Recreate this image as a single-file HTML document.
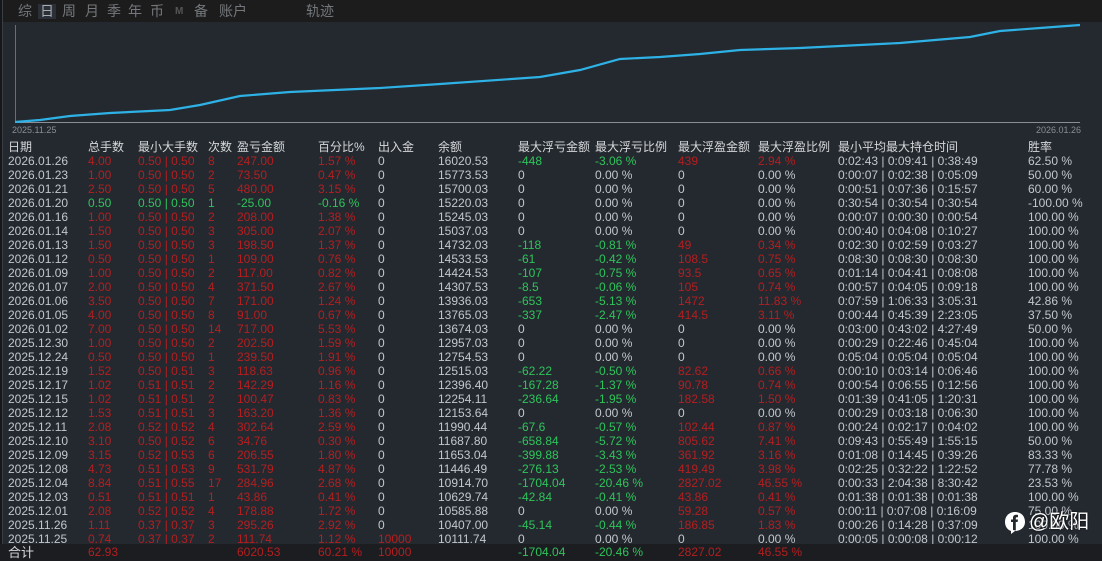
<!DOCTYPE html>
<html><head><meta charset="utf-8"><style>
*{margin:0;padding:0;box-sizing:border-box}
body{width:1102px;height:561px;overflow:hidden;background:#242930;font-family:"Liberation Sans","Noto Sans CJK SC",sans-serif;position:relative;color:#c3c7cc}
.top{position:absolute;left:0;top:0;width:1102px;height:22px;background:#1c1c1c}
.tab{position:absolute;top:4px;font-size:14px;color:#74787c;line-height:15px}
.sel{background:#2b3038;color:#a8acb0;padding:0 2px;margin-left:-2px}
.strip{position:absolute;left:0;top:0;width:3px;height:561px;background:#15171a;border-right:1px solid #3a3f46}
.r{position:absolute;left:0;width:1102px;height:14px;font-size:12px;line-height:14px}
.r i{font-style:normal;position:absolute;top:0;white-space:nowrap}
.r i:nth-child(1){left:8px}.r i:nth-child(2){left:88px}.r i:nth-child(3){left:138px}.r i:nth-child(4){left:208px}
.r i:nth-child(5){left:237px}.r i:nth-child(6){left:318px}.r i:nth-child(7){left:378px}.r i:nth-child(8){left:438px}
.r i:nth-child(9){left:518px}.r i:nth-child(10){left:595px}.r i:nth-child(11){left:678px}.r i:nth-child(12){left:758px}
.r i:nth-child(13){left:838px}.r i:nth-child(14){left:1028px}
.h{color:#d6d8da;font-size:12px}
.R{color:#b51e1f}.G{color:#2ec45a}
.rr i:nth-child(n+2):nth-child(-n+6){color:#b51e1f}
.gg i:nth-child(n+2):nth-child(-n+6){color:#2ec45a}
.tot{background:#1b1d21;height:17px;top:544px!important;line-height:17px}
</style></head><body>
<div class="top"></div>
<div class="strip"></div>
<span class="tab" style="left:18px">综</span>
<span class="tab sel" style="left:40px">日</span>
<span class="tab" style="left:62px">周</span>
<span class="tab" style="left:85px">月</span>
<span class="tab" style="left:107px">季</span>
<span class="tab" style="left:128px">年</span>
<span class="tab" style="left:150px">币</span>
<span class="tab" style="left:175px;font-size:10px;font-weight:bold;color:#555">M</span>
<span class="tab" style="left:194px">备</span>
<span class="tab" style="left:219px">账户</span>
<span class="tab" style="left:306px">轨迹</span>
<svg style="position:absolute;left:0;top:0" width="1102" height="140">
<line x1="15.5" y1="25" x2="15.5" y2="122" stroke="#6a6e74" stroke-width="1"/>
<line x1="15" y1="122.5" x2="1080" y2="122.5" stroke="#8a8e94" stroke-width="1"/>
<polyline fill="none" stroke="#2eb2e6" stroke-width="2.2" points="15,122 40,120 70,116 110,113 170,110 200,105 240,96 290,92 380,88 440,84 540,77 580,70 620,59 660,57 700,54 740,50 800,48 900,43 970,37 1000,31 1040,28 1080,25"/>
<text x="12" y="133" font-size="9" fill="#8a8e94" font-family="Liberation Sans">2025.11.25</text>
<text x="1036" y="133" font-size="9" fill="#8a8e94" font-family="Liberation Sans">2026.01.26</text>
</svg>
<div class="r h" style="top:140px"><i>日期</i><i>总手数</i><i>最小大手数</i><i>次数</i><i>盈亏金额</i><i>百分比%</i><i>出入金</i><i>余额</i><i>最大浮亏金额</i><i>最大浮亏比例</i><i>最大浮盈金额</i><i>最大浮盈比例</i><i>最小平均最大持仓时间</i><i>胜率</i></div>
<div class="r rr" style="top:154px"><i>2026.01.26</i><i>4.00</i><i>0.50 | 0.50</i><i>8</i><i>247.00</i><i>1.57 %</i><i>0</i><i>16020.53</i><i class="G">-448</i><i class="G">-3.06 %</i><i class="R">439</i><i class="R">2.94 %</i><i>0:02:43 | 0:09:41 | 0:38:49</i><i>62.50 %</i></div>
<div class="r rr" style="top:168px"><i>2026.01.23</i><i>1.00</i><i>0.50 | 0.50</i><i>2</i><i>73.50</i><i>0.47 %</i><i>0</i><i>15773.53</i><i>0</i><i>0.00 %</i><i>0</i><i>0.00 %</i><i>0:00:07 | 0:02:38 | 0:05:09</i><i>50.00 %</i></div>
<div class="r rr" style="top:182px"><i>2026.01.21</i><i>2.50</i><i>0.50 | 0.50</i><i>5</i><i>480.00</i><i>3.15 %</i><i>0</i><i>15700.03</i><i>0</i><i>0.00 %</i><i>0</i><i>0.00 %</i><i>0:00:51 | 0:07:36 | 0:15:57</i><i>60.00 %</i></div>
<div class="r gg" style="top:196px"><i>2026.01.20</i><i>0.50</i><i>0.50 | 0.50</i><i>1</i><i>-25.00</i><i>-0.16 %</i><i>0</i><i>15220.03</i><i>0</i><i>0.00 %</i><i>0</i><i>0.00 %</i><i>0:30:54 | 0:30:54 | 0:30:54</i><i>-100.00 %</i></div>
<div class="r rr" style="top:210px"><i>2026.01.16</i><i>1.00</i><i>0.50 | 0.50</i><i>2</i><i>208.00</i><i>1.38 %</i><i>0</i><i>15245.03</i><i>0</i><i>0.00 %</i><i>0</i><i>0.00 %</i><i>0:00:07 | 0:00:30 | 0:00:54</i><i>100.00 %</i></div>
<div class="r rr" style="top:224px"><i>2026.01.14</i><i>1.50</i><i>0.50 | 0.50</i><i>3</i><i>305.00</i><i>2.07 %</i><i>0</i><i>15037.03</i><i>0</i><i>0.00 %</i><i>0</i><i>0.00 %</i><i>0:00:40 | 0:04:08 | 0:10:27</i><i>100.00 %</i></div>
<div class="r rr" style="top:238px"><i>2026.01.13</i><i>1.50</i><i>0.50 | 0.50</i><i>3</i><i>198.50</i><i>1.37 %</i><i>0</i><i>14732.03</i><i class="G">-118</i><i class="G">-0.81 %</i><i class="R">49</i><i class="R">0.34 %</i><i>0:02:30 | 0:02:59 | 0:03:27</i><i>100.00 %</i></div>
<div class="r rr" style="top:252px"><i>2026.01.12</i><i>0.50</i><i>0.50 | 0.50</i><i>1</i><i>109.00</i><i>0.76 %</i><i>0</i><i>14533.53</i><i class="G">-61</i><i class="G">-0.42 %</i><i class="R">108.5</i><i class="R">0.75 %</i><i>0:08:30 | 0:08:30 | 0:08:30</i><i>100.00 %</i></div>
<div class="r rr" style="top:266px"><i>2026.01.09</i><i>1.00</i><i>0.50 | 0.50</i><i>2</i><i>117.00</i><i>0.82 %</i><i>0</i><i>14424.53</i><i class="G">-107</i><i class="G">-0.75 %</i><i class="R">93.5</i><i class="R">0.65 %</i><i>0:01:14 | 0:04:41 | 0:08:08</i><i>100.00 %</i></div>
<div class="r rr" style="top:280px"><i>2026.01.07</i><i>2.00</i><i>0.50 | 0.50</i><i>4</i><i>371.50</i><i>2.67 %</i><i>0</i><i>14307.53</i><i class="G">-8.5</i><i class="G">-0.06 %</i><i class="R">105</i><i class="R">0.74 %</i><i>0:00:57 | 0:04:05 | 0:09:18</i><i>100.00 %</i></div>
<div class="r rr" style="top:294px"><i>2026.01.06</i><i>3.50</i><i>0.50 | 0.50</i><i>7</i><i>171.00</i><i>1.24 %</i><i>0</i><i>13936.03</i><i class="G">-653</i><i class="G">-5.13 %</i><i class="R">1472</i><i class="R">11.83 %</i><i>0:07:59 | 1:06:33 | 3:05:31</i><i>42.86 %</i></div>
<div class="r rr" style="top:308px"><i>2026.01.05</i><i>4.00</i><i>0.50 | 0.50</i><i>8</i><i>91.00</i><i>0.67 %</i><i>0</i><i>13765.03</i><i class="G">-337</i><i class="G">-2.47 %</i><i class="R">414.5</i><i class="R">3.11 %</i><i>0:00:44 | 0:45:39 | 2:23:05</i><i>37.50 %</i></div>
<div class="r rr" style="top:322px"><i>2026.01.02</i><i>7.00</i><i>0.50 | 0.50</i><i>14</i><i>717.00</i><i>5.53 %</i><i>0</i><i>13674.03</i><i>0</i><i>0.00 %</i><i>0</i><i>0.00 %</i><i>0:03:00 | 0:43:02 | 4:27:49</i><i>50.00 %</i></div>
<div class="r rr" style="top:336px"><i>2025.12.30</i><i>1.00</i><i>0.50 | 0.50</i><i>2</i><i>202.50</i><i>1.59 %</i><i>0</i><i>12957.03</i><i>0</i><i>0.00 %</i><i>0</i><i>0.00 %</i><i>0:00:29 | 0:22:46 | 0:45:04</i><i>100.00 %</i></div>
<div class="r rr" style="top:350px"><i>2025.12.24</i><i>0.50</i><i>0.50 | 0.50</i><i>1</i><i>239.50</i><i>1.91 %</i><i>0</i><i>12754.53</i><i>0</i><i>0.00 %</i><i>0</i><i>0.00 %</i><i>0:05:04 | 0:05:04 | 0:05:04</i><i>100.00 %</i></div>
<div class="r rr" style="top:364px"><i>2025.12.19</i><i>1.52</i><i>0.50 | 0.51</i><i>3</i><i>118.63</i><i>0.96 %</i><i>0</i><i>12515.03</i><i class="G">-62.22</i><i class="G">-0.50 %</i><i class="R">82.62</i><i class="R">0.66 %</i><i>0:00:10 | 0:03:14 | 0:06:46</i><i>100.00 %</i></div>
<div class="r rr" style="top:378px"><i>2025.12.17</i><i>1.02</i><i>0.51 | 0.51</i><i>2</i><i>142.29</i><i>1.16 %</i><i>0</i><i>12396.40</i><i class="G">-167.28</i><i class="G">-1.37 %</i><i class="R">90.78</i><i class="R">0.74 %</i><i>0:00:54 | 0:06:55 | 0:12:56</i><i>100.00 %</i></div>
<div class="r rr" style="top:392px"><i>2025.12.15</i><i>1.02</i><i>0.51 | 0.51</i><i>2</i><i>100.47</i><i>0.83 %</i><i>0</i><i>12254.11</i><i class="G">-236.64</i><i class="G">-1.95 %</i><i class="R">182.58</i><i class="R">1.50 %</i><i>0:01:39 | 0:41:05 | 1:20:31</i><i>100.00 %</i></div>
<div class="r rr" style="top:406px"><i>2025.12.12</i><i>1.53</i><i>0.51 | 0.51</i><i>3</i><i>163.20</i><i>1.36 %</i><i>0</i><i>12153.64</i><i>0</i><i>0.00 %</i><i>0</i><i>0.00 %</i><i>0:00:29 | 0:03:18 | 0:06:30</i><i>100.00 %</i></div>
<div class="r rr" style="top:420px"><i>2025.12.11</i><i>2.08</i><i>0.52 | 0.52</i><i>4</i><i>302.64</i><i>2.59 %</i><i>0</i><i>11990.44</i><i class="G">-67.6</i><i class="G">-0.57 %</i><i class="R">102.44</i><i class="R">0.87 %</i><i>0:00:24 | 0:02:17 | 0:04:02</i><i>100.00 %</i></div>
<div class="r rr" style="top:434px"><i>2025.12.10</i><i>3.10</i><i>0.50 | 0.52</i><i>6</i><i>34.76</i><i>0.30 %</i><i>0</i><i>11687.80</i><i class="G">-658.84</i><i class="G">-5.72 %</i><i class="R">805.62</i><i class="R">7.41 %</i><i>0:09:43 | 0:55:49 | 1:55:15</i><i>50.00 %</i></div>
<div class="r rr" style="top:448px"><i>2025.12.09</i><i>3.15</i><i>0.52 | 0.53</i><i>6</i><i>206.55</i><i>1.80 %</i><i>0</i><i>11653.04</i><i class="G">-399.88</i><i class="G">-3.43 %</i><i class="R">361.92</i><i class="R">3.16 %</i><i>0:01:08 | 0:14:45 | 0:39:26</i><i>83.33 %</i></div>
<div class="r rr" style="top:462px"><i>2025.12.08</i><i>4.73</i><i>0.51 | 0.53</i><i>9</i><i>531.79</i><i>4.87 %</i><i>0</i><i>11446.49</i><i class="G">-276.13</i><i class="G">-2.53 %</i><i class="R">419.49</i><i class="R">3.98 %</i><i>0:02:25 | 0:32:22 | 1:22:52</i><i>77.78 %</i></div>
<div class="r rr" style="top:476px"><i>2025.12.04</i><i>8.84</i><i>0.51 | 0.55</i><i>17</i><i>284.96</i><i>2.68 %</i><i>0</i><i>10914.70</i><i class="G">-1704.04</i><i class="G">-20.46 %</i><i class="R">2827.02</i><i class="R">46.55 %</i><i>0:00:33 | 2:04:38 | 8:30:42</i><i>23.53 %</i></div>
<div class="r rr" style="top:490px"><i>2025.12.03</i><i>0.51</i><i>0.51 | 0.51</i><i>1</i><i>43.86</i><i>0.41 %</i><i>0</i><i>10629.74</i><i class="G">-42.84</i><i class="G">-0.41 %</i><i class="R">43.86</i><i class="R">0.41 %</i><i>0:01:38 | 0:01:38 | 0:01:38</i><i>100.00 %</i></div>
<div class="r rr" style="top:504px"><i>2025.12.01</i><i>2.08</i><i>0.52 | 0.52</i><i>4</i><i>178.88</i><i>1.72 %</i><i>0</i><i>10585.88</i><i>0</i><i>0.00 %</i><i class="R">59.28</i><i class="R">0.57 %</i><i>0:00:11 | 0:07:08 | 0:16:09</i><i>75.00 %</i></div>
<div class="r rr" style="top:518px"><i>2025.11.26</i><i>1.11</i><i>0.37 | 0.37</i><i>3</i><i>295.26</i><i>2.92 %</i><i>0</i><i>10407.00</i><i class="G">-45.14</i><i class="G">-0.44 %</i><i class="R">186.85</i><i class="R">1.83 %</i><i>0:00:26 | 0:14:28 | 0:37:09</i><i>100.00 %</i></div>
<div class="r rr" style="top:532px"><i>2025.11.25</i><i>0.74</i><i>0.37 | 0.37</i><i>2</i><i>111.74</i><i>1.12 %</i><i class="R">10000</i><i>10111.74</i><i>0</i><i>0.00 %</i><i>0</i><i>0.00 %</i><i>0:00:05 | 0:00:08 | 0:00:12</i><i>100.00 %</i></div>
<div class="r tot" style="top:544px"><i style="color:#d6d8da;font-size:13px">合计</i><i class="R">62.93</i><i></i><i></i><i class="R">6020.53</i><i class="R">60.21 %</i><i class="R">10000</i><i></i><i class="G">-1704.04</i><i class="G">-20.46 %</i><i class="R">2827.02</i><i class="R">46.55 %</i><i></i><i></i></div>
<svg style="position:absolute;left:1004px;top:511px" width="22" height="24" viewBox="0 0 22 24">
<path d="M11 1 C5 1 1 5 1 11 C1 16 4 19 7 20 L7 23 L11 20 C17 20 21 16 21 11 C21 5 17 1 11 1 Z" fill="#fff"/>
<path d="M9 19 L9 11 L7 11 L7 8.5 L9 8.5 L9 7 C9 4.8 10.3 3.8 12.3 3.8 L14 3.9 L14 6.2 L12.8 6.2 C12 6.2 11.8 6.6 11.8 7.3 L11.8 8.5 L14 8.5 L13.6 11 L11.8 11 L11.8 19.5 Z" fill="#242930"/>
</svg>
<div style="position:absolute;left:1029px;top:510px;font-size:20px;line-height:24px;color:#fff;text-shadow:0 0 2px #000">@欧阳</div>
</body></html>
